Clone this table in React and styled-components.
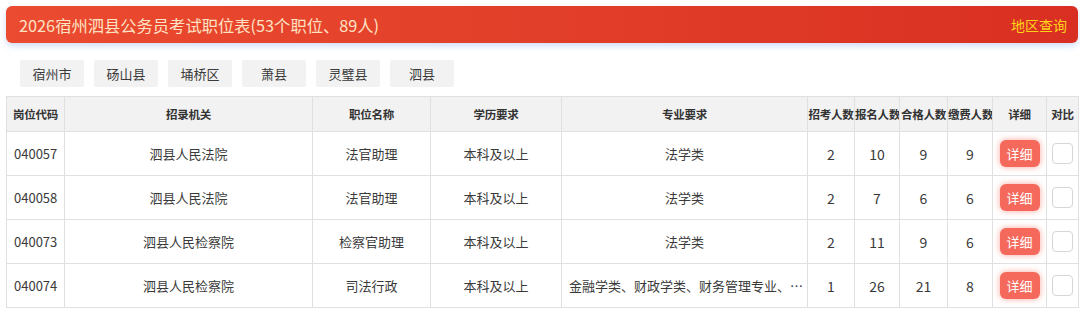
import styled, { createGlobalStyle } from "styled-components";

const GlobalStyle = createGlobalStyle`
  body {
    margin: 0;
    background: #fff;
    font-family: "Noto Sans CJK SC", "Noto Sans", sans-serif;
    color: #333;
  }
`;

const Page = styled.div`
  padding: 6px 2px 0 6px;
  height: 311px;
  box-sizing: border-box;
  overflow: hidden;
`;

const TitleBar = styled.div`
  height: 37px;
  display: flex;
  align-items: center;
  justify-content: space-between;
  padding: 0 11px 0 13px;
  border-radius: 6px;
  background: linear-gradient(90deg, #eb4b30 0%, #e03c28 60%, #d92f22 100%);
  box-shadow: 0 3px 6px rgba(120, 160, 235, 0.35);
`;

const Title = styled.h1`
  margin: 0;
  font-size: 16.3px;
  font-weight: 400;
  color: #fde2c4;
`;

const QueryLink = styled.span`
  font-size: 14px;
  color: #ffd21a;
`;

const Regions = styled.div`
  display: flex;
  gap: 10px;
  padding: 17px 14px 9px;
`;

const RegionTab = styled.button`
  width: 64px;
  height: 27px;
  border: none;
  border-radius: 2px;
  background: #f2f2f2;
  font-family: inherit;
  font-size: 13px;
  color: #3a3a3a;
  padding: 0;
`;

const Table = styled.table`
  width: 1072px;
  table-layout: fixed;
  border-collapse: collapse;
  font-size: 13px;
  color: #3a3a3a;
`;

const Th = styled.th`
  height: 34px;
  background: #f2f2f2;
  border: 1px solid #e0e0e0;
  font-size: 11.5px;
  font-weight: 700;
  color: #333;
  padding: 0;
  white-space: nowrap;
  overflow: hidden;
  letter-spacing: -0.2px;
`;

const Td = styled.td`
  height: 43px;
  border: 1px solid #e0e0e0;
  text-align: ${(p) => (p.$left ? "left" : "center")};
  padding: 0 0 0 ${(p) => (p.$left ? "7px" : "0")};
  white-space: nowrap;
  overflow: hidden;
  font-size: ${(p) => (p.$num ? "14px" : "13px")};
`;

const DetailButton = styled.button`
  width: 40px;
  height: 27px;
  border: none;
  border-radius: 6px;
  background: #f4695c;
  color: #fff;
  font-family: inherit;
  font-size: 13px;
  padding: 0;
  box-shadow: 0 0 6px rgba(244, 105, 92, 0.6);
`;

const CompareBox = styled.span`
  display: inline-block;
  width: 19px;
  height: 19px;
  border: 1px solid #d6d6d6;
  border-radius: 4px;
  background: #fff;
  vertical-align: middle;
`;

const widths = [58, 248, 118, 131, 246, 47, 45, 48, 45, 54, 32];
const headers = [
  "岗位代码",
  "招录机关",
  "职位名称",
  "学历要求",
  "专业要求",
  "招考人数",
  "报名人数",
  "合格人数",
  "缴费人数",
  "详细",
  "对比",
];

const regions = ["宿州市", "砀山县", "埇桥区", "萧县", "灵璧县", "泗县"];

const rows = [
  ["040057", "泗县人民法院", "法官助理", "本科及以上", "法学类", 2, 10, 9, 9],
  ["040058", "泗县人民法院", "法官助理", "本科及以上", "法学类", 2, 7, 6, 6],
  ["040073", "泗县人民检察院", "检察官助理", "本科及以上", "法学类", 2, 11, 9, 6],
  ["040074", "泗县人民检察院", "司法行政", "本科及以上", "金融学类、财政学类、财务管理专业、…", 1, 26, 21, 8],
];

export default function App() {
  return (
    <Page>
      <GlobalStyle />
      <TitleBar>
        <Title>2026宿州泗县公务员考试职位表(53个职位、89人)</Title>
        <QueryLink>地区查询</QueryLink>
      </TitleBar>
      <Regions>
        {regions.map((r) => (
          <RegionTab key={r}>{r}</RegionTab>
        ))}
      </Regions>
      <Table>
        <colgroup>
          {widths.map((w, i) => (
            <col key={i} style={{ width: w }} />
          ))}
        </colgroup>
        <thead>
          <tr>
            {headers.map((h) => (
              <Th key={h}>{h}</Th>
            ))}
          </tr>
        </thead>
        <tbody>
          {rows.map((r) => (
            <tr key={r[0]}>
              <Td $left>{r[0]}</Td>
              <Td>{r[1]}</Td>
              <Td>{r[2]}</Td>
              <Td>{r[3]}</Td>
              <Td $left={r[4].length > 10}>{r[4]}</Td>
              <Td $num>{r[5]}</Td>
              <Td $num>{r[6]}</Td>
              <Td $num>{r[7]}</Td>
              <Td $num>{r[8]}</Td>
              <Td>
                <DetailButton>详细</DetailButton>
              </Td>
              <Td>
                <CompareBox />
              </Td>
            </tr>
          ))}
        </tbody>
      </Table>
    </Page>
  );
}
